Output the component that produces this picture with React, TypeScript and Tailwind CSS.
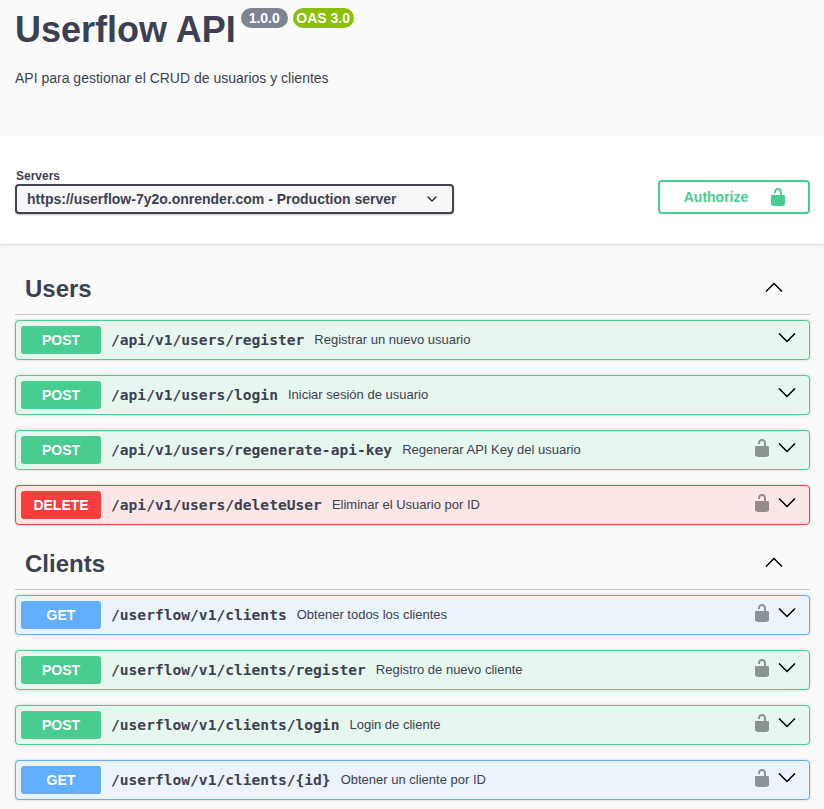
import { ChevronDown } from 'lucide-react';

type Method = 'POST' | 'GET' | 'DELETE';

interface Op {
    method: Method;
    path: string;
    summary: string;
    locked?: boolean;
}

const users: Op[] = [
    { method: 'POST', path: '/api/v1/users/register', summary: 'Registrar un nuevo usuario' },
    { method: 'POST', path: '/api/v1/users/login', summary: 'Iniciar sesión de usuario' },
    { method: 'POST', path: '/api/v1/users/regenerate-api-key', summary: 'Regenerar API Key del usuario', locked: true },
    { method: 'DELETE', path: '/api/v1/users/deleteUser', summary: 'Eliminar el Usuario por ID', locked: true },
];

const clients: Op[] = [
    { method: 'GET', path: '/userflow/v1/clients', summary: 'Obtener todos los clientes', locked: true },
    { method: 'POST', path: '/userflow/v1/clients/register', summary: 'Registro de nuevo cliente', locked: true },
    { method: 'POST', path: '/userflow/v1/clients/login', summary: 'Login de cliente', locked: true },
    { method: 'GET', path: '/userflow/v1/clients/{id}', summary: 'Obtener un cliente por ID', locked: true },
];

const rowStyles: Record<Method, string> = {
    POST: 'bg-[#e8f6f0] border-[#49cc90]',
    GET: 'bg-[#ebf3fb] border-[#61affe]',
    DELETE: 'bg-[#fce6e6] border-[#f93e3e]',
};

const badgeStyles: Record<Method, string> = {
    POST: 'bg-[#49cc90]',
    GET: 'bg-[#61affe]',
    DELETE: 'bg-[#f93e3e]',
};

const LockOpen = ({ className }: { className: string }) => (
    <svg viewBox="0 0 20 20" className={className} fill="currentColor">
        <path d="M15.8 8H14V5.6C14 2.703 12.665 1 10 1 7.334 1 6 2.703 6 5.6V6h2v-.801C8 3.754 8.797 3 10 3c1.203 0 2 .754 2 2.199V8H4c-.553 0-1 .646-1 1.199V17c0 .549.428 1.139.951 1.307l1.197.387C5.672 18.861 6.55 19 7.1 19h5.8c.549 0 1.428-.139 1.951-.307l1.196-.387c.524-.167.953-.757.953-1.306V9.199C17 8.646 16.352 8 15.8 8z" />
    </svg>
);

const Chevron = ({ up }: { up?: boolean }) => (
    <svg viewBox="0 0 18 10" className="w-[18px] h-[10px] mb-1 text-black" fill="none" stroke="currentColor" strokeWidth="1.5">
        <path d={up ? 'M1 9.5 9 1.5 17 9.5' : 'M1 .5 9 8.5 17 .5'} />
    </svg>
);

const OpRow = ({ op }: { op: Op }) => (
    <div className={`h-10 mb-[15px] flex items-center pl-[5px] pr-[13px] border rounded shadow-[0_0_3px_rgba(0,0,0,0.19)] ${rowStyles[op.method]}`}>
        <span className={`w-20 h-7 rounded-[3px] flex items-center justify-center text-white text-sm font-bold shrink-0 ${badgeStyles[op.method]}`}>
            {op.method}
        </span>
        <span className="ml-2.5 font-['DejaVu_Sans_Mono',monospace] text-[14.6px] font-bold text-[#3b4151] whitespace-nowrap">{op.path}</span>
        <span className="ml-2.5 text-[13px] text-[#3b4151] whitespace-nowrap">{op.summary}</span>
        <span className="flex-1" />
        {op.locked && <LockOpen className="w-5 h-5 text-black/40 mr-[6px] -mt-1" />}
        <Chevron />
    </div>
);

const Tag = ({ name, ops }: { name: string; ops: Op[] }) => (
    <section>
        <div className="h-[52px] flex items-center justify-between pl-2.5 pr-[27px] border-b border-[#3b4151]/30 mb-[5px]">
            <h3 className="text-2xl font-bold text-[#3b4151]">{name}</h3>
            <Chevron up />
        </div>
        {ops.map((op) => <OpRow key={op.path} op={op} />)}
    </section>
);

export default function App() {
    return (
        <div className="h-[809px] overflow-hidden bg-[#fafafa] font-['Liberation_Sans',Arial,sans-serif]">
            <header className="h-[136px] px-[15px]">
                <div className="flex items-start pt-[7px]">
                    <h1 className="text-4xl leading-[45px] font-bold text-[#3b4151]">Userflow API</h1>
                    <span className="ml-[5px] mt-[1px] w-[47px] h-5 rounded-full bg-[#7d8492] text-white text-sm font-bold flex items-center justify-center">1.0.0</span>
                    <span className="ml-[5px] mt-[1px] w-[61px] h-5 rounded-full bg-[#89bf04] text-white text-sm font-bold flex items-center justify-center whitespace-nowrap">OAS 3.0</span>
                </div>
                <p className="mt-[16px] text-sm leading-[21px] text-[#3b4151]">API para gestionar el CRUD de usuarios y clientes</p>
            </header>
            <div className="h-[108px] bg-white shadow-[0_1px_2px_rgba(0,0,0,0.15)] px-[15px] flex items-start justify-between pt-[33px]">
                <div>
                    <div className="pl-px text-xs leading-[15px] font-bold text-[#3b4151]">Servers</div>
                    <div className="w-[439px] h-[30px] border-2 border-[#41444e] rounded bg-[#f7f7f7] shadow-[0_1px_2px_rgba(0,0,0,0.25)] flex items-center justify-between pl-[10px] pr-[12px]">
                        <span className="text-sm font-bold text-[#3b4151] whitespace-nowrap">https://userflow-7y2o.onrender.com - Production server</span>
                        <ChevronDown className="w-4 h-4 text-[#222]" strokeWidth={2} />
                    </div>
                </div>
                <button className="mt-[11px] mr-[-1px] w-[152px] h-[34px] border-2 border-[#49cc90] rounded text-[#49cc90] text-sm font-bold flex items-center justify-center gap-5 pl-1">
                    Authorize
                    <LockOpen className="w-5 h-5" />
                </button>
            </div>
            <main className="px-[15px] pt-[19px] pr-[14px]">
                <Tag name="Users" ops={users} />
                <div className="-mt-[2px]">
                    <Tag name="Clients" ops={clients} />
                </div>
            </main>
        </div>
    );
}
